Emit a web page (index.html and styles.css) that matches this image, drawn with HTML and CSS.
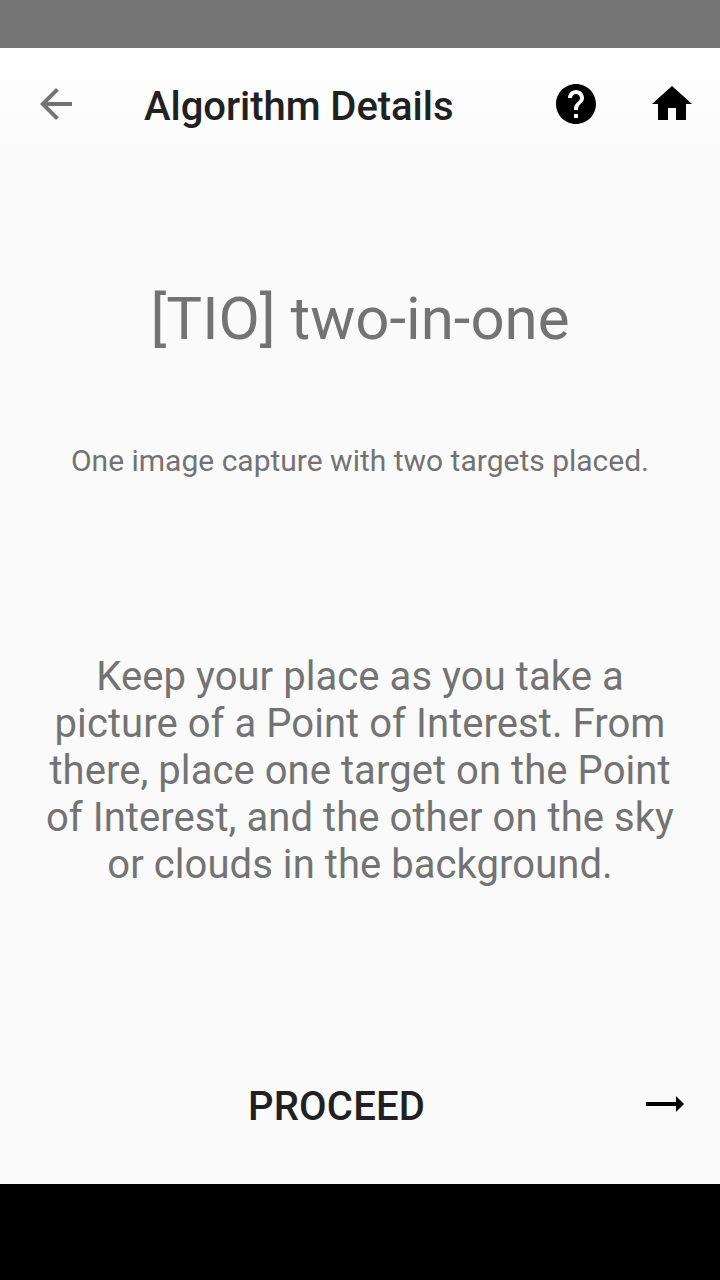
FILE: index.html
```html
<!DOCTYPE html>
<html lang="en">
<head>
<meta charset="utf-8">
<title>Algorithm Details</title>
<link rel="stylesheet" href="styles.css">
</head>
<body>
<div class="status-bar"></div>
<header class="toolbar">
  <svg class="icon back" viewBox="0 0 24 24"><path d="M20 11H7.83l5.59-5.59L12 4l-8 8 8 8 1.41-1.41L7.83 13H20v-2z"/></svg>
  <h1 class="title">Algorithm Details</h1>
  <svg class="icon help" viewBox="0 0 24 24"><path d="M12 2C6.48 2 2 6.48 2 12s4.480 10 10 10 10-4.480 10-10S17.520 2 12 2zm1 17h-2v-2h2v2zm2.070-7.750l-.9.920C13.450 12.900 13 13.500 13 15h-2v-.5c0-1.100.450-2.100 1.170-2.830l1.240-1.260c.370-.360.590-.860.590-1.410 0-1.100-.9-2-2-2s-2 .9-2 2H8c0-2.210 1.790-4 4-4s4 1.790 4 4c0 .880-.360 1.680-.930 2.250z"/></svg>
  <svg class="icon home" viewBox="0 0 24 24"><path d="M10 20v-6h4v6h5v-8h3L12 3 2 12h3v8z"/></svg>
</header>
<main class="content">
  <h2 class="name">[TIO] two-in-one</h2>
  <p class="summary">One image capture with two targets placed.</p>
  <p class="description">Keep your place as you take a<br>picture of a Point of Interest. From<br>there, place one target on the Point<br>of Interest, and the other on the sky<br>or clouds in the background.</p>
</main>
<button class="proceed">
  <span class="label">PROCEED</span>
  <svg class="arrow" viewBox="0 0 38 16"><path d="M0 6h30V0l8 8-8 8v-6H0z"/></svg>
</button>
<div class="nav-bar"></div>
</body>
</html>
```
FILE: styles.css
```css
* { box-sizing: border-box; margin: 0; padding: 0; }
body {
  display: flex;
  flex-direction: column;
  width: 720px;
  height: 1280px;
  overflow: hidden;
  background: #fafafa;
  font-family: Roboto, sans-serif;
  color: #737373;
}
.status-bar { height: 48px; background: #757575; }
.toolbar {
  display: flex;
  align-items: center;
  height: 112px;
  padding: 0 24px 0 32px;
  background: linear-gradient(#fff, #fafafa);
}
.icon { width: 48px; height: 48px; flex: none; }
.back { fill: #737373; }
.title {
  flex: 1;
  margin-left: 64px;
  padding-top: 4px;
  font-size: 40px;
  font-weight: 500;
  line-height: 47px;
  letter-spacing: -0.04px;
  color: #212121;
}
.home { margin-left: 48px; }
.content { flex: 1; text-align: center; }
.name { padding-top: 124px; font-size: 60px; font-weight: 400; line-height: 70px; }
.summary { padding-top: 89px; font-size: 30px; line-height: 35px; }
.description { padding-top: 175px; font-size: 40px; line-height: 47px; letter-spacing: 0.06px; }
.proceed {
  display: flex;
  align-items: center;
  height: 160px;
  padding: 0 36px 0 248px;
  border: 0;
  background: none;
  font: 500 40px/47px Roboto, sans-serif;
  color: #212121;
}
.label { flex: 1; padding-top: 4px; text-align: left; letter-spacing: 0.2px; }
.arrow { width: 38px; height: 16px; fill: #000; }
.nav-bar { height: 96px; background: #000; }
```
